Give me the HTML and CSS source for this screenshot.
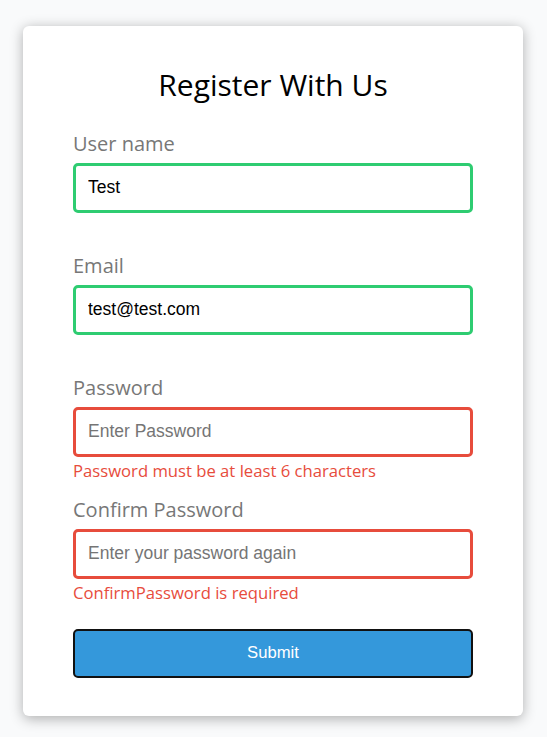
FILE: index.html
```html
<!DOCTYPE html>
<html lang="en">
<head>
<meta charset="UTF-8">
<title>Register With Us</title>
<link rel="stylesheet" href="styles.css">
</head>
<body>
<div class="container">
  <form class="form">
    <h2 class="title">Register With Us</h2>
    <div class="form-control success">
      <label for="username">User name</label>
      <input type="text" id="username" value="Test" placeholder="Enter username">
    </div>
    <div class="form-control success">
      <label for="email">Email</label>
      <input type="text" id="email" value="test@test.com" placeholder="Enter email">
    </div>
    <div class="form-control error">
      <label for="password">Password</label>
      <input type="password" id="password" placeholder="Enter Password">
      <small>Password must be at least 6 characters</small>
    </div>
    <div class="form-control error">
      <label for="password2">Confirm Password</label>
      <input type="password" id="password2" placeholder="Enter your password again">
      <small>ConfirmPassword is required</small>
    </div>
    <button type="button" class="submit">Submit</button>
  </form>
</div>
</body>
</html>
```
FILE: styles.css
```css
* {
  box-sizing: border-box;
}

body {
  margin: 0;
  min-height: 737px;
  padding-top: 26px;
  background-color: #f9fafb;
  font-family: "Open Sans", "Noto Sans", sans-serif;
  display: flex;
  justify-content: center;
  align-items: flex-start;
}

.container {
  width: 500px;
  margin-left: -1px;
  background-color: #fff;
  border-radius: 6px;
  box-shadow: 0 2.5px 12.5px rgba(0, 0, 0, 0.3);
}

.form {
  padding: 37.5px 50px 38.5px;
}

.title {
  text-align: center;
  font-size: 30px;
  font-weight: 400;
  color: #000;
  margin: 0 0 25px;
}

.form-control {
  position: relative;
  margin-bottom: 13.8px;
  padding-bottom: 25px;
}

.form-control label {
  display: block;
  color: #777;
  font-size: 20px;
  margin-bottom: 6.25px;
}

.form-control input {
  display: block;
  width: 100%;
  border: 3px solid #f0f0f0;
  border-radius: 5px;
  padding: 11.5px 12px;
  font-family: "Liberation Sans", Arial, sans-serif;
  font-size: 17.5px;
  color: #000;
  background: #fff;
  outline: none;
}

.form-control input::placeholder {
  color: #757575;
}

.form-control.success input {
  border-color: #2ecc71;
}

.form-control.error input {
  border-color: #e74c3c;
}

.form-control small {
  position: absolute;
  left: 0;
  bottom: 0;
  color: #e74c3c;
  font-size: 16.67px;
}

.submit {
  display: block;
  width: 100%;
  margin-top: 25px;
  padding: 12.5px;
  background-color: #3498db;
  border: 2px solid #111;
  border-radius: 5px;
  color: #fff;
  font-family: "Liberation Sans", Arial, sans-serif;
  font-size: 16.67px;
}
```
